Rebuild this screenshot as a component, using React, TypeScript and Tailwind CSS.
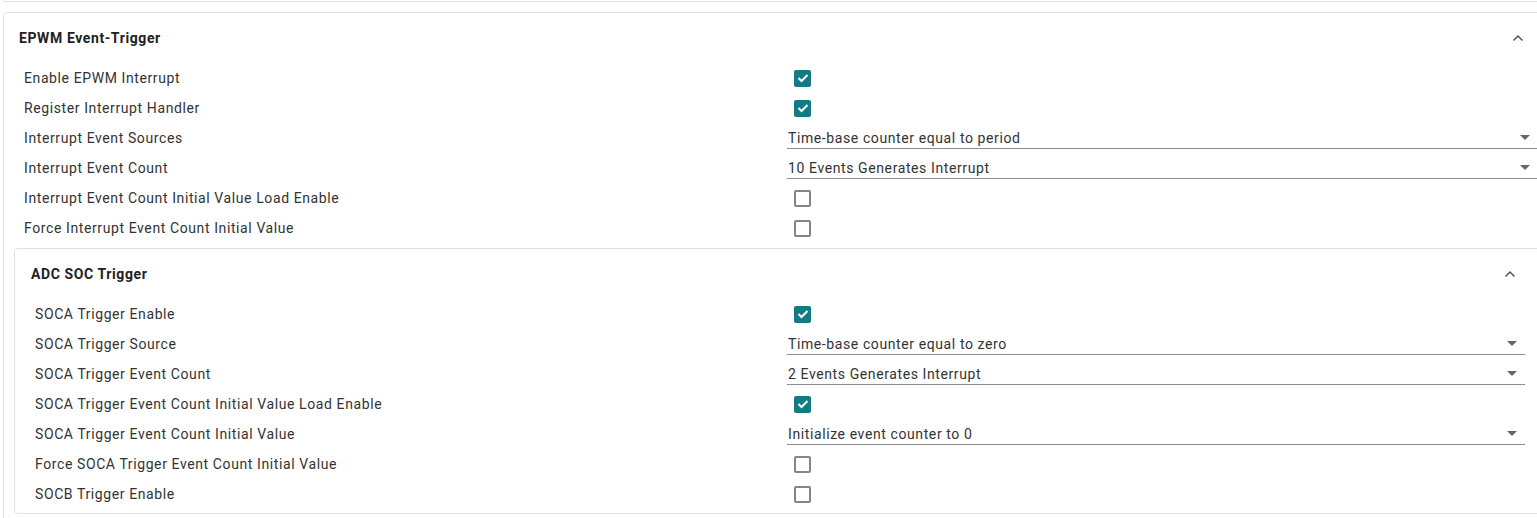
import React from 'react';

type Row = {
  label: string;
  kind: 'check' | 'select';
  checked?: boolean;
  value?: string;
};

const epwmRows: Row[] = [
  { label: 'Enable EPWM Interrupt', kind: 'check', checked: true },
  { label: 'Register Interrupt Handler', kind: 'check', checked: true },
  { label: 'Interrupt Event Sources', kind: 'select', value: 'Time-base counter equal to period' },
  { label: 'Interrupt Event Count', kind: 'select', value: '10 Events Generates Interrupt' },
  { label: 'Interrupt Event Count Initial Value Load Enable', kind: 'check', checked: false },
  { label: 'Force Interrupt Event Count Initial Value', kind: 'check', checked: false },
];

const adcRows: Row[] = [
  { label: 'SOCA Trigger Enable', kind: 'check', checked: true },
  { label: 'SOCA Trigger Source', kind: 'select', value: 'Time-base counter equal to zero' },
  { label: 'SOCA Trigger Event Count', kind: 'select', value: '2 Events Generates Interrupt' },
  { label: 'SOCA Trigger Event Count Initial Value Load Enable', kind: 'check', checked: true },
  { label: 'SOCA Trigger Event Count Initial Value', kind: 'select', value: 'Initialize event counter to 0' },
  { label: 'Force SOCA Trigger Event Count Initial Value', kind: 'check', checked: false },
  { label: 'SOCB Trigger Enable', kind: 'check', checked: false },
];

const ChevronUp = () => (
  <svg width="12" height="8" viewBox="0 0 12 8" className="block">
    <path d="M1.5 6.5 L6 2 L10.5 6.5" fill="none" stroke="#555" strokeWidth="1.5" />
  </svg>
);

const Caret = () => (
  <svg width="10" height="5" viewBox="0 0 10 5" className="block">
    <path d="M0 0 L10 0 L5 5 Z" fill="#666" />
  </svg>
);

const Checkbox = ({ checked }: { checked?: boolean }) =>
  checked ? (
    <div className="ml-[7px] mt-[2px] w-[17px] h-[17px] rounded-[2px] bg-[#117b86] flex items-center justify-center">
      <svg width="12" height="10" viewBox="0 0 12 10">
        <path d="M1.5 5 L4.5 8 L10.5 2" fill="none" stroke="#fff" strokeWidth="2" />
      </svg>
    </div>
  ) : (
    <div className="ml-[7px] mt-[2px] w-[17px] h-[17px] rounded-[2px] border-2 border-[#858585] bg-white" />
  );

const SettingRow = ({ row, labelWidth }: { row: Row; labelWidth: string }) => (
  <div className="flex items-center h-[30px]">
    <div className={`${labelWidth} shrink-0 pt-[2px] text-[14px] tracking-[0.6px] text-[#333]`}>{row.label}</div>
    <div className="flex-1">
      {row.kind === 'check' ? (
        <Checkbox checked={row.checked} />
      ) : (
        <div className="flex items-center justify-between h-[22px] mt-[2px] border-b border-[#8c8c8c] pl-[1px] pr-[8px]">
          <span className="pt-[1px] text-[14px] tracking-[0.6px] text-[#333]">{row.value}</span>
          <Caret />
        </div>
      )}
    </div>
  </div>
);

export default function App() {
  return (
    <div
      className="w-[1537px] h-[518px] overflow-hidden bg-white"
      style={{ fontFamily: 'Roboto, "Liberation Sans", sans-serif' }}
    >
      <div className="ml-[3px] w-[1560px] h-[2px] border-l border-b border-[#e2e2e2] rounded-bl-[4px]" />

      <div className="mt-[10px] ml-[3px] w-[1545px] border border-[#e2e2e2] rounded-[4px] pb-[10px]">
        <div className="h-[49px] flex items-center justify-between pl-[15px] pr-[23px]">
          <span className="pt-[2px] text-[14px] tracking-[0.6px] font-bold text-[#222]">EPWM Event-Trigger</span>
          <ChevronUp />
        </div>
        <div className="pl-[20px] pr-[9px]">
          {epwmRows.map((r) => (
            <SettingRow key={r.label} row={r} labelWidth="w-[763px]" />
          ))}
        </div>

        <div className="mt-[6px] ml-[10px] mr-[2px] border border-[#e2e2e2] rounded-[4px] pb-[5px]">
          <div className="h-[49px] flex items-center justify-between pl-[16px] pr-[28px]">
            <span className="pt-[2px] text-[14px] tracking-[0.6px] font-bold text-[#222]">ADC SOC Trigger</span>
            <ChevronUp />
          </div>
          <div className="pl-[20px] pr-[19px]">
            {adcRows.map((r) => (
              <SettingRow key={r.label} row={r} labelWidth="w-[752px]" />
            ))}
          </div>
        </div>
      </div>
    </div>
  );
}
